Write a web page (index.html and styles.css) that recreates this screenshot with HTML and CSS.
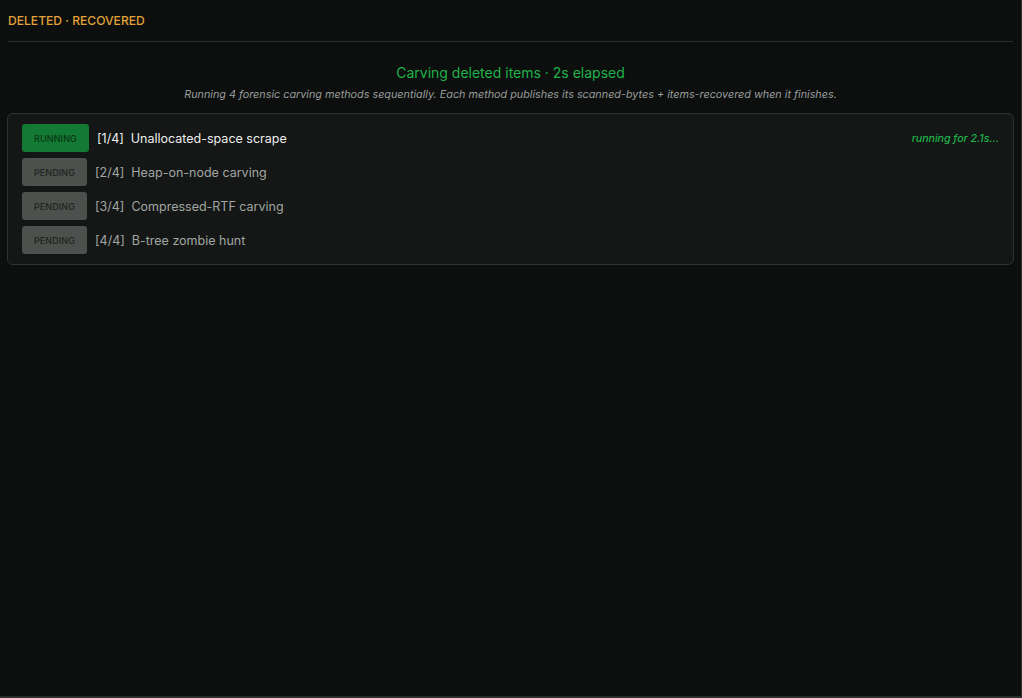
FILE: index.html
```html
<!DOCTYPE html>
<html lang="en">
<head>
<meta charset="utf-8">
<title>Deleted · Recovered</title>
<link rel="stylesheet" href="styles.css">
</head>
<body>
<div class="page">
  <header class="top">
    <h1 class="section-title">DELETED · RECOVERED</h1>
  </header>
  <div class="status">
    <div class="status-title">Carving deleted items · 2s elapsed</div>
    <div class="status-sub">Running 4 forensic carving methods sequentially. Each method publishes its scanned-bytes + items-recovered when it finishes.</div>
  </div>
  <div class="card">
    <div class="row active">
      <span class="badge running">RUNNING</span>
      <span class="step">[1/4]</span>
      <span class="name">Unallocated-space scrape</span>
      <span class="timer">running for 2.1s...</span>
    </div>
    <div class="row">
      <span class="badge pending">PENDING</span>
      <span class="step">[2/4]</span>
      <span class="name">Heap-on-node carving</span>
    </div>
    <div class="row">
      <span class="badge pending">PENDING</span>
      <span class="step">[3/4]</span>
      <span class="name">Compressed-RTF carving</span>
    </div>
    <div class="row">
      <span class="badge pending">PENDING</span>
      <span class="step">[4/4]</span>
      <span class="name">B-tree zombie hunt</span>
    </div>
  </div>
</div>
</body>
</html>
```

FILE: styles.css
```css
* { box-sizing: border-box; }
html, body {
  margin: 0;
  height: 100%;
  background: #0c0f0e;
}
body {
  font-family: Inter, "Noto Sans", "Liberation Sans", sans-serif;
  color: #d8dbd9;
}
.page {
  height: 698px;
  padding: 0 8px;
  border-right: 1px solid #2a2e2c;
  border-bottom: 2px solid #2a2e2c;
}
.top {
  border-bottom: 1px solid #2b2f2d;
  padding-top: 13px;
  height: 42px;
}
.section-title {
  margin: 0;
  font-size: 12.1px;
  font-weight: 500;
  color: #e2a23a;
  line-height: 16px;
}
.status {
  text-align: center;
  padding-top: 22px;
}
.status-title {
  color: #1fb34a;
  font-size: 14px;
  line-height: 18px;
}
.status-sub {
  margin-top: 6px;
  color: #9a9d9b;
  font-style: italic;
  font-size: 10.8px;
  line-height: 14px;
}
.card {
  margin: 11px -1px 0;
  border: 1px solid #2e3230;
  border-radius: 6px;
  background: #141715;
  padding: 10px 14px 10px;
  display: flex;
  flex-direction: column;
  gap: 6px;
}
.row {
  display: flex;
  align-items: center;
  height: 28px;
  font-size: 12.5px;
  color: #a2a6a3;
}
.row.active { color: #eceeed; }
.badge {
  display: inline-flex;
  align-items: center;
  justify-content: center;
  height: 28px;
  border-radius: 3px;
  font-size: 9px;
  font-weight: 500;
  letter-spacing: 0.1px;
  margin-right: 8px;
}
.badge.running {
  width: 67px;
  background: #137a33;
  color: #0a3716;
}
.badge.pending {
  width: 65px;
  background: #4c514d;
  color: #202321;
}
.step { margin-right: 7px; }
.name { flex: 1; }
.timer {
  color: #1fb34a;
  font-style: italic;
  font-size: 10.6px;
  font-weight: 500;
}
```
